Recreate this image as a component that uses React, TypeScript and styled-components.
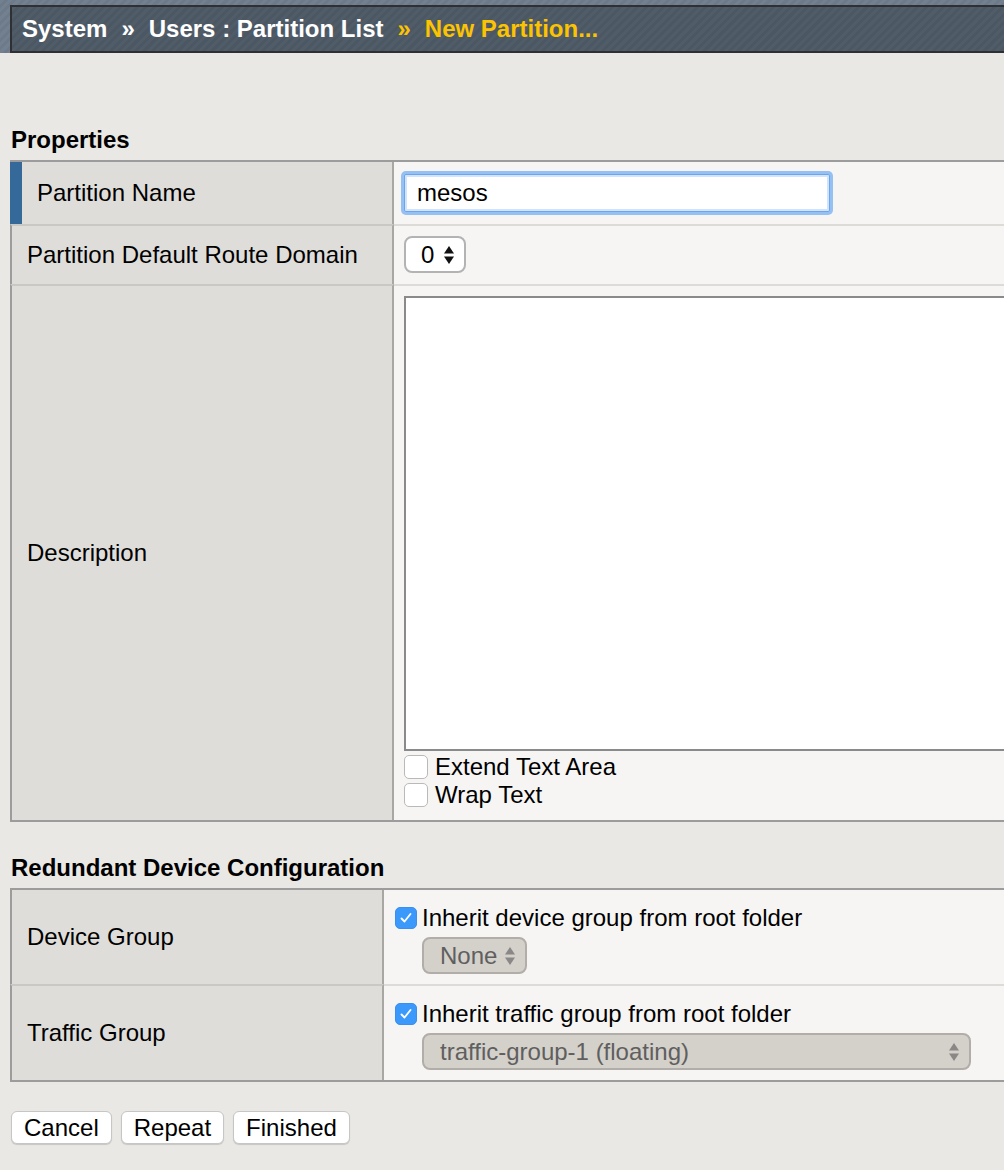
import React from "react";
import styled, { createGlobalStyle } from "styled-components";

const GlobalStyle = createGlobalStyle`
  html, body { margin: 0; padding: 0; }
  body {
    background: #eae8e4;
    font-family: "Liberation Sans", Arial, Helvetica, sans-serif;
    color: #000;
    overflow-x: hidden;
  }
`;

const FONT = "24px";

const Page = styled.div`
  width: 100%;
  overflow: hidden;
  padding-bottom: 26px;
`;

const HeaderBand = styled.div`
  height: 53px;
  box-sizing: border-box;
  padding: 5px 0 0 10px;
  background: repeating-linear-gradient(135deg, #72808f 0 3px, #6d7a89 3px 6px);
`;

const HeaderBox = styled.div`
  height: 48px;
  box-sizing: border-box;
  border: 2px solid #2e3033;
  border-right: none;
  background: repeating-linear-gradient(135deg, #515c69 0 3px, #4c5764 3px 6px);
  display: flex;
  align-items: center;
  padding-left: 10px;
  font-size: 24px;
  font-weight: bold;
  color: #fff;
  white-space: nowrap;
`;

const Crumb = styled.span<{ $current?: boolean }>`
  color: ${(p) => (p.$current ? "#fcc300" : "#ffffff")};
`;

const Sep = styled.span<{ $current?: boolean }>`
  color: ${(p) => (p.$current ? "#fcc300" : "#ffffff")};
  margin: 0 14px;
`;

const Main = styled.div`
  padding: 73px 0 0 10px;
`;

const Heading = styled.h2<{ $gapTop?: number; $gapBottom?: number }>`
  margin: ${(p) => p.$gapTop ?? 0}px 0 ${(p) => p.$gapBottom ?? 6}px 1px;
  font-size: ${FONT};
  line-height: 28px;
  font-weight: bold;
`;

const Table = styled.div`
  width: calc(100% + 40px);
  border-top: 2px solid #9c9c9c;
  border-bottom: 2px solid #9c9c9c;
`;

const Row = styled.div`
  display: flex;
`;

const LabelCell = styled.div<{ $w: number; $marked?: boolean; $first?: boolean }>`
  flex: 0 0 ${(p) => p.$w}px;
  box-sizing: border-box;
  background: #dfddd9;
  border-left: ${(p) => (p.$marked ? "12px solid #35699a" : "2px solid #9c9c9c")};
  border-right: 2px solid #a9a7a4;
  border-top: ${(p) => (p.$first ? "none" : "2px solid #cac8c4")};
  display: flex;
  align-items: center;
  padding-left: 15px;
  font-size: ${FONT};
  white-space: nowrap;
`;

const ValueCell = styled.div<{ $first?: boolean; $pad: string }>`
  flex: 1;
  min-width: 0;
  background: #f6f5f3;
  border-top: ${(p) => (p.$first ? "none" : "2px solid #dddbd7")};
  padding: ${(p) => p.$pad};
  display: flex;
  flex-direction: column;
  align-items: flex-start;
`;

const TextInput = styled.div`
  box-sizing: border-box;
  width: 426px;
  height: 38px;
  margin: 2px;
  background: #fff;
  border: 1px solid #6ea5ea;
  box-shadow: 0 0 0 3px #94c0f4, inset 0 0 0 2px #d2e4fb;
  border-radius: 2px;
  display: flex;
  align-items: center;
  padding-left: 12px;
  font-size: ${FONT};
`;

const SelectBox = styled.div<{ $disabled?: boolean; $w: number; $indent?: number }>`
  box-sizing: border-box;
  width: ${(p) => p.$w}px;
  height: 37px;
  margin-left: ${(p) => p.$indent ?? 0}px;
  border: 2px solid ${(p) => (p.$disabled ? "#b1ada8" : "#b3b3b3")};
  border-radius: 8px;
  background: ${(p) => (p.$disabled ? "#d4d0ca" : "#ffffff")};
  color: ${(p) => (p.$disabled ? "#5f5f5f" : "#000")};
  display: flex;
  align-items: center;
  justify-content: space-between;
  padding: 0 9px 0 ${(p) => (p.$disabled ? 16 : 15)}px;
  font-size: ${FONT};
  white-space: nowrap;
`;

const SelectText = styled.span`
  line-height: 1;
`;

const TextArea = styled.textarea`
  display: block;
  box-sizing: border-box;
  width: 100%;
  height: 455px;
  margin: 0 0 4px 0;
  border: 2px solid #8a8a8a;
  background: #fff;
  resize: none;
  outline: none;
`;

const CheckLine = styled.label<{ $h: number; $gap: number }>`
  display: flex;
  align-items: center;
  height: ${(p) => p.$h}px;
  gap: ${(p) => p.$gap}px;
  font-size: ${FONT};
  white-space: nowrap;
`;

const CheckBox = styled.span<{ $checked?: boolean; $size: number }>`
  box-sizing: border-box;
  width: ${(p) => p.$size}px;
  height: ${(p) => p.$size}px;
  border-radius: 5px;
  border: 1px solid ${(p) => (p.$checked ? "#3b8ff0" : "#b9b9b9")};
  background: ${(p) => (p.$checked ? "#3c99fc" : "#ffffff")};
  display: flex;
  align-items: center;
  justify-content: center;
  flex: 0 0 auto;
`;

const Checks = styled.div`
  display: flex;
  flex-direction: column;
  gap: 4px;
`;

const Stack = styled.div`
  display: flex;
  flex-direction: column;
  gap: 5px;
`;

const Buttons = styled.div`
  display: flex;
  gap: 9px;
  margin: 29px 0 0 1px;
`;

const Button = styled.button`
  box-sizing: border-box;
  height: 33px;
  padding: 0 12px;
  background: #fff;
  border: 1px solid #c6c6c6;
  border-radius: 6px;
  box-shadow: 0 1px 1px rgba(0, 0, 0, 0.15);
  font-family: "Liberation Sans", Arial, Helvetica, sans-serif;
  font-size: ${FONT};
  color: #000;
  line-height: 1;
`;

const Arrows = ({ color }: { color: string }) => (
  <svg width="12" height="20" viewBox="0 0 12 20">
    <polygon points="1,8.5 6,1 11,8.5" fill={color} />
    <polygon points="1,11.5 6,19 11,11.5" fill={color} />
  </svg>
);

const Tick = () => (
  <svg width="16" height="16" viewBox="0 0 16 16">
    <polyline points="3.5,8.5 6.5,11.5 12.5,4" fill="none" stroke="#fff" strokeWidth="1.8" strokeLinecap="round" strokeLinejoin="round" />
  </svg>
);

export default function App() {
  return (
    <Page>
      <GlobalStyle />
      <HeaderBand>
        <HeaderBox>
          <Crumb>System</Crumb>
          <Sep>»</Sep>
          <Crumb>Users : Partition List</Crumb>
          <Sep $current>»</Sep>
          <Crumb $current>New Partition...</Crumb>
        </HeaderBox>
      </HeaderBand>
      <Main>
        <Heading>Properties</Heading>
        <Table>
          <Row>
            <LabelCell $w={384} $marked $first>Partition Name</LabelCell>
            <ValueCell $first $pad="10px 10px 10px 8px">
              <TextInput>mesos</TextInput>
            </ValueCell>
          </Row>
          <Row>
            <LabelCell $w={384}>Partition Default Route Domain</LabelCell>
            <ValueCell $pad="10px 10px 11px 10px">
              <SelectBox $w={62}>
                <SelectText>0</SelectText>
                <Arrows color="#111" />
              </SelectBox>
            </ValueCell>
          </Row>
          <Row>
            <LabelCell $w={384}>Description</LabelCell>
            <ValueCell $pad="10px 10px 13px 10px">
              <TextArea defaultValue="" />
              <Checks>
                <CheckLine $h={24} $gap={7}>
                  <CheckBox $size={24} />
                  Extend Text Area
                </CheckLine>
                <CheckLine $h={24} $gap={7}>
                  <CheckBox $size={24} />
                  Wrap Text
                </CheckLine>
              </Checks>
            </ValueCell>
          </Row>
        </Table>

        <Heading $gapTop={32} $gapBottom={6}>Redundant Device Configuration</Heading>
        <Table>
          <Row>
            <LabelCell $w={374} $first>Device Group</LabelCell>
            <ValueCell $first $pad="14px 10px 10px 11px">
              <Stack>
                <CheckLine $h={28} $gap={5}>
                  <CheckBox $size={22} $checked>
                    <Tick />
                  </CheckBox>
                  Inherit device group from root folder
                </CheckLine>
                <SelectBox $w={105} $indent={27} $disabled>
                  <SelectText>None</SelectText>
                  <Arrows color="#8a8886" />
                </SelectBox>
              </Stack>
            </ValueCell>
          </Row>
          <Row>
            <LabelCell $w={374}>Traffic Group</LabelCell>
            <ValueCell $pad="14px 10px 10px 11px">
              <Stack>
                <CheckLine $h={28} $gap={5}>
                  <CheckBox $size={22} $checked>
                    <Tick />
                  </CheckBox>
                  Inherit traffic group from root folder
                </CheckLine>
                <SelectBox $w={549} $indent={27} $disabled>
                  <SelectText>traffic-group-1 (floating)</SelectText>
                  <Arrows color="#8a8886" />
                </SelectBox>
              </Stack>
            </ValueCell>
          </Row>
        </Table>

        <Buttons>
          <Button>Cancel</Button>
          <Button>Repeat</Button>
          <Button>Finished</Button>
        </Buttons>
      </Main>
    </Page>
  );
}
